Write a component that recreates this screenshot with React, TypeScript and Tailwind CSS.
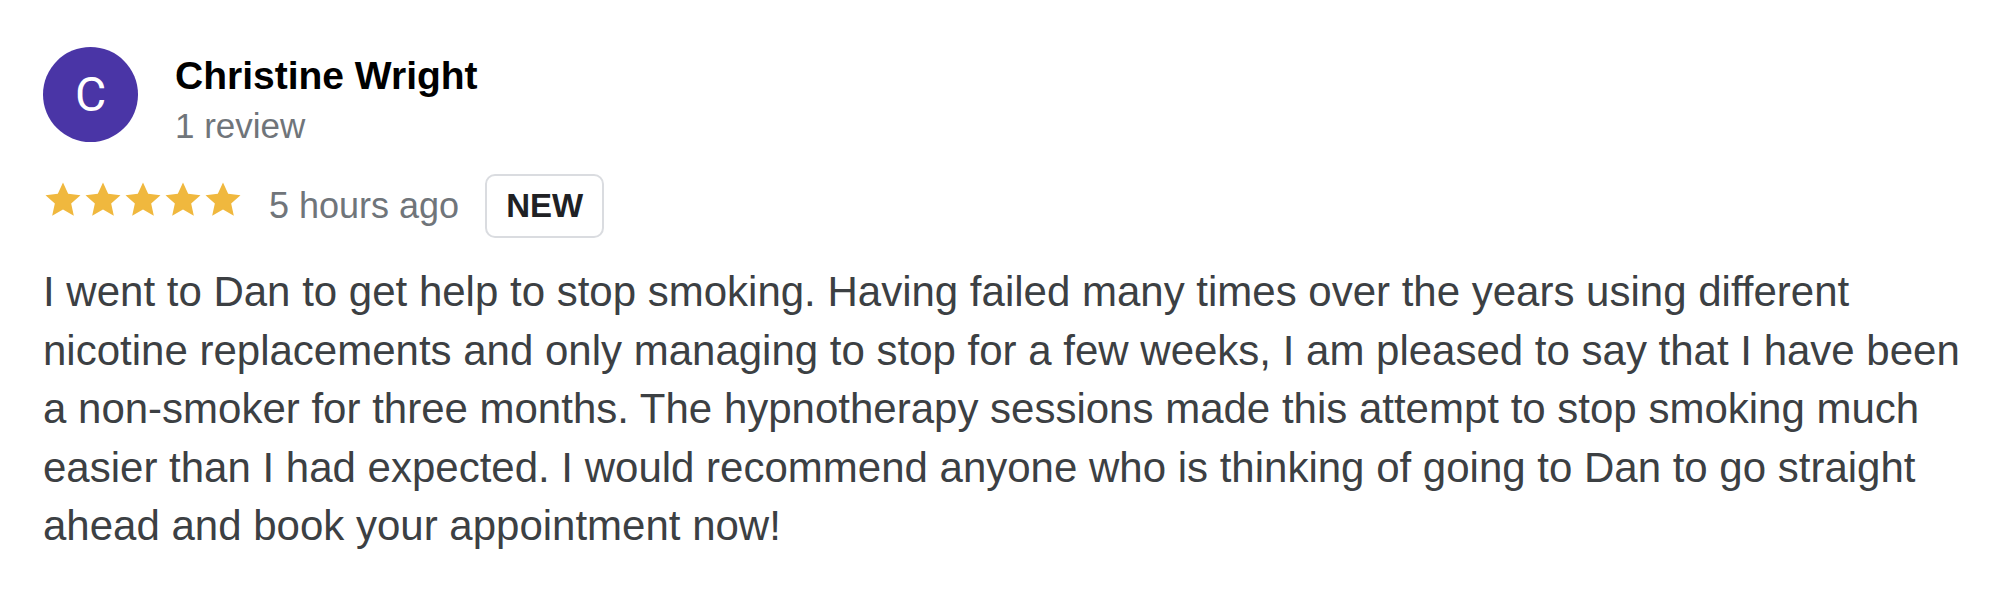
import React from 'react';

const review = {
  name: 'Christine Wright',
  initial: 'C',
  count: '1 review',
  rating: 5,
  when: '5 hours ago',
  text:
    'I went to Dan to get help to stop smoking. Having failed many times over the years using different nicotine replacements and only managing to stop for a few weeks, I am pleased to say that I have been a non-smoker for three months. The hypnotherapy sessions made this attempt to stop smoking much easier than I had expected. I would recommend anyone who is thinking of going to Dan to go straight ahead and book your appointment now!',
};

function Star() {
  return (
    <svg viewBox="0 0 24 24" className="w-[40px] h-[40px]" aria-hidden="true">
      <polygon
        fill="#f0b83e"
        points="12,1.5 15.1,8.3 22.5,9.1 16.9,14.1 18.5,21.5 12,17.7 5.5,21.5 7.1,14.1 1.5,9.1 8.9,8.3"
      />
    </svg>
  );
}

export default function App() {
  return (
    <div className="w-full h-[600px] bg-white pl-[43px] pt-[47px] font-['Liberation_Sans',Arial,sans-serif]">
      {/* Header */}
      <div className="flex items-start">
        <div className="w-[95px] h-[95px] rounded-full bg-[#4a35a6] flex items-center justify-center flex-shrink-0">
          <span className="text-white text-[48px] leading-none font-['Roboto',sans-serif]">
            {review.initial}
          </span>
        </div>
        <div className="ml-[37px] pt-[5px]">
          <div className="text-[39px] leading-[47px] font-bold text-black">{review.name}</div>
          <div className="mt-[6px] text-[35px] leading-[42px] text-[#70757a]">{review.count}</div>
        </div>
      </div>

      {/* Rating row */}
      <div className="flex items-center mt-[27px]">
        <div className="flex mb-[12px]">
          {Array.from({ length: review.rating }).map((_, i) => (
            <Star key={i} />
          ))}
        </div>
        <span className="ml-[26px] text-[36px] leading-[42px] text-[#70757a]">{review.when}</span>
        <span className="ml-[26px] h-[64px] px-[19px] flex items-center rounded-[10px] border-2 border-[#dadce0] text-[33px] font-bold text-[#202124]">
          NEW
        </span>
      </div>

      {/* Body */}
      <p className="mt-[25px] w-[1935px] text-[42px] leading-[58.6px] text-[#3c4043]">{review.text}</p>
    </div>
  );
}
